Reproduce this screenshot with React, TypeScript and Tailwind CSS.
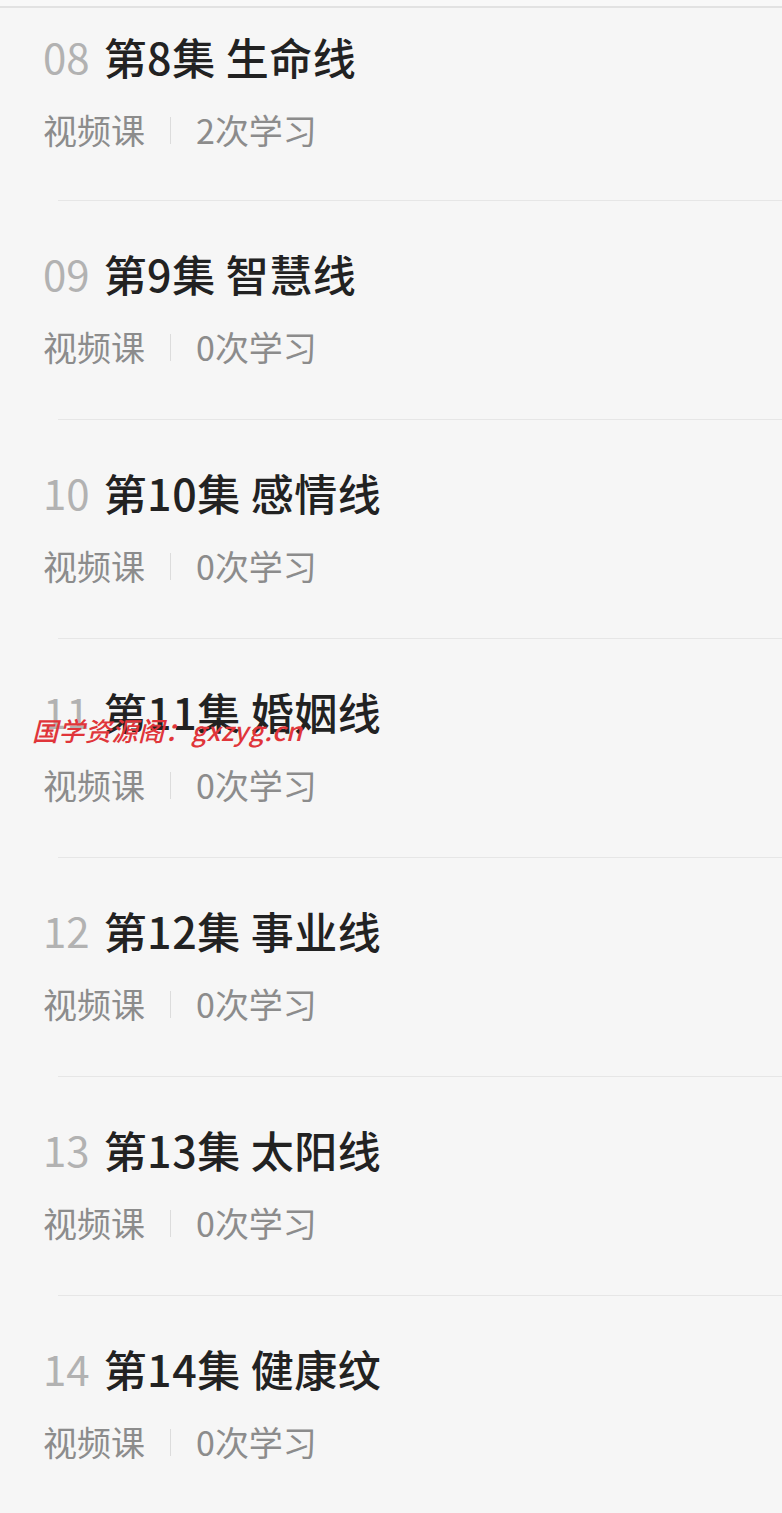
import React from 'react';

const lessons = [
  { no: '08', title: '第8集 生命线', views: 2 },
  { no: '09', title: '第9集 智慧线', views: 0 },
  { no: '10', title: '第10集 感情线', views: 0 },
  { no: '11', title: '第11集 婚姻线', views: 0 },
  { no: '12', title: '第12集 事业线', views: 0 },
  { no: '13', title: '第13集 太阳线', views: 0 },
  { no: '14', title: '第14集 健康纹', views: 0 },
];

const font = { fontFamily: '"Noto Sans CJK SC", "Noto Sans", sans-serif' };

export default function App() {
  return (
    <div className="relative w-[782px] h-[1513px] overflow-hidden bg-[#f6f6f6]" style={font}>
      <div className="h-[8px] bg-[#f8f8f8] border-b-2 border-[#e2e2e2]" />
      {lessons.map((l, i) => (
        <div key={l.no}>
          <div className={`${i === 0 ? 'pt-[24px] pb-[50px]' : 'pt-[48px] pb-[52px]'} pl-[43px]`}>
            <div className="flex items-center h-[48px] leading-[48px]">
              <span className="text-[42px] text-[#b2b2b2] font-normal">{l.no}</span>
              <span className="ml-[14px] text-[43px] tracking-[0.5px] text-[#222222] font-medium">{l.title}</span>
            </div>
            <div className="flex items-center h-[40px] mt-[30px] text-[34px] leading-[40px] text-[#8c8c8c]">
              <span>视频课</span>
              <span className="mx-[25px] w-px h-[27px] bg-[#dcdcdc]" />
              <span>{l.views}次学习</span>
            </div>
          </div>
          {i < lessons.length - 1 && <div className="ml-[58px] h-px bg-[#e6e6e6]" />}
        </div>
      ))}
      <div className="absolute left-[32px] top-[713px] text-[26px] leading-[34px] italic font-medium tracking-[0.5px] text-[#e0353a]">
        国学资源阁：gxzyg.cn
      </div>
    </div>
  );
}
